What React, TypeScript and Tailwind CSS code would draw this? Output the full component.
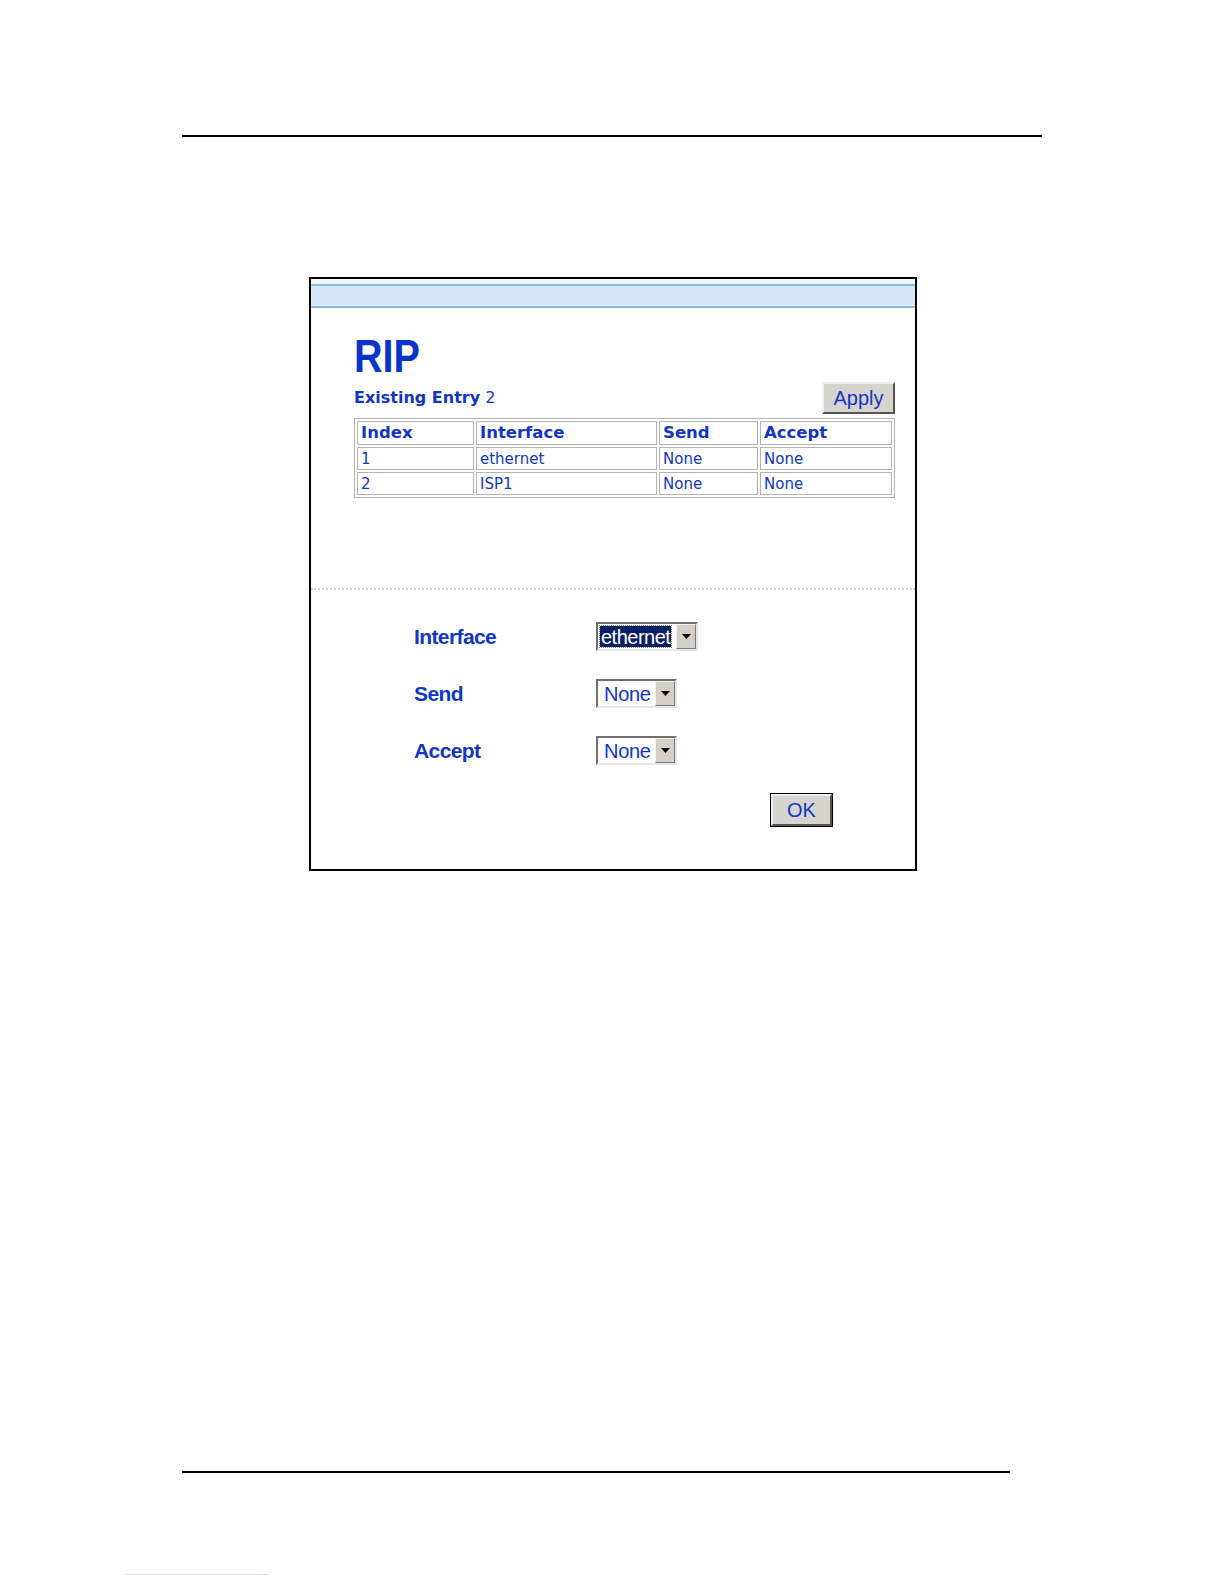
import React from 'react'

const blue = 'text-[#1236c4]'

function Select({ value, width, active }: { value: string; width: string; active?: boolean }) {
  return (
    <div className={`${width} h-[29px] flex border-2 border-t-[#6f6f6f] border-l-[#6f6f6f] border-b-[#e6e6e6] border-r-[#e6e6e6] bg-white`}>
      <div className="flex-1 flex items-center pl-[2px] pr-[1px] py-[2px]">
        {active ? (
          <span className="h-full flex items-center bg-[#0a1f66] text-white px-[1px] outline-1 outline-dotted outline-[#8a8a8a] text-[20px] leading-none tracking-[-0.5px] font-['Liberation_Sans',Arial,sans-serif]">
            {value}
          </span>
        ) : (
          <span className={`${blue} pl-[4px] text-[20px] leading-none tracking-[-0.3px] font-['Liberation_Sans',Arial,sans-serif]`}>{value}</span>
        )}
      </div>
      <div className="w-[20px] bg-[#d4d0c8] border border-t-[#f4f4f4] border-l-[#f4f4f4] border-b-[#7a7a7a] border-r-[#7a7a7a] flex items-center justify-center">
        <svg width="9" height="6" viewBox="0 0 9 6">
          <path d="M0 0h9L4.5 5z" fill="#000" />
        </svg>
      </div>
    </div>
  )
}

function Btn({ label, className }: { label: string; className: string }) {
  return (
    <div
      className={`${className} flex items-center justify-center bg-[#d6d4cf] border-2 border-t-[#eeeeee] border-l-[#eeeeee] border-b-[#555] border-r-[#555] ${blue} text-[20px] leading-none font-['Liberation_Sans',Arial,sans-serif]`}
    >
      {label}
    </div>
  )
}

const rows = [
  ['1', 'ethernet', 'None', 'None'],
  ['2', 'ISP1', 'None', 'None'],
]

export default function App() {
  const cell = 'border border-[#b4b4b4] px-[3px] py-0 text-left align-middle leading-[18px]'
  return (
    <div className="w-[1224px] bg-white">
      <div className="pt-[135px] pl-[182px]">
        <div className="w-[860px] h-[2px] bg-black" />
      </div>

      {/* screenshot frame */}
      <div className="mt-[140px] ml-[309px] w-[608px] h-[594px] border-2 border-black flex flex-col">
        <div className="h-[30px] flex flex-col bg-white">
          <div className="h-[5px] bg-[#f2f8fc]" />
          <div className="h-[2px] bg-[#8cbbe2]" />
          <div className="h-[19px] bg-[#d3e7f6]" />
          <div className="h-[1px] bg-[#e6f1fa]" />
          <div className="h-[2px] bg-[#86b4dc]" />
        </div>

        <div className="pl-[43px] pr-[20px]">
          <div className="mt-[24px] h-[46px] text-[46px] leading-[46px] font-bold text-[#0a33cc] font-['Liberation_Sans',Arial,sans-serif]">
            <span className="inline-block origin-left scale-x-[0.86]">RIP</span>
          </div>
          <div className="mt-[3px] flex items-end justify-between">
            <div className={`${blue} pb-[8px] text-[16px] leading-none font-['DejaVu_Sans',Verdana,sans-serif]`}>
              <span className="font-bold">Existing Entry</span> 2
            </div>
            <Btn label="Apply" className="w-[73px] h-[32px]" />
          </div>
          <table className="mt-[4px] w-[541px] border border-[#b4b4b4] border-separate border-spacing-[2px] font-['DejaVu_Sans',Verdana,sans-serif]">
            <thead>
              <tr className={`h-[24px] ${blue} text-[16.5px]`}>
                <th className={`${cell} w-[117px] font-bold`}>Index</th>
                <th className={`${cell} w-[181px] font-bold`}>Interface</th>
                <th className={`${cell} w-[99px] font-bold`}>Send</th>
                <th className={`${cell} font-bold`}>Accept</th>
              </tr>
            </thead>
            <tbody>
              {rows.map((r) => (
                <tr key={r[0]} className={`h-[23px] ${blue} text-[15px]`}>
                  {r.map((c, i) => (
                    <td key={i} className={cell}>
                      {c}
                    </td>
                  ))}
                </tr>
              ))}
            </tbody>
          </table>
        </div>

        <div className="mt-[90px] border-t-2 border-dotted border-[#cfcfcf]" />

        <div className="pl-[103px] pt-[32px] flex flex-col gap-[28px] font-['Liberation_Sans',Arial,sans-serif]">
          {[
            ['Interface', 'ethernet', 'w-[102px]', true],
            ['Send', 'None', 'w-[81px]', false],
            ['Accept', 'None', 'w-[81px]', false],
          ].map(([label, val, w, act]) => (
            <div key={label as string} className="flex items-center h-[29px]">
              <div className={`w-[182px] ${blue} text-[21px] font-bold tracking-[-0.6px]`}>{label as string}</div>
              <Select value={val as string} width={w as string} active={act as boolean} />
            </div>
          ))}
          <div className="pl-[356px]">
            <div className="w-[63px] h-[34px] border border-black">
              <Btn label="OK" className="w-full h-full" />
            </div>
          </div>
        </div>
      </div>

      <div className="mt-[600px] ml-[182px] w-[828px] h-[2px] bg-black" />
      <div className="mt-[101px] ml-[126px] w-[143px] h-[1px] bg-[#dde4f0]" />
    </div>
  )
}
